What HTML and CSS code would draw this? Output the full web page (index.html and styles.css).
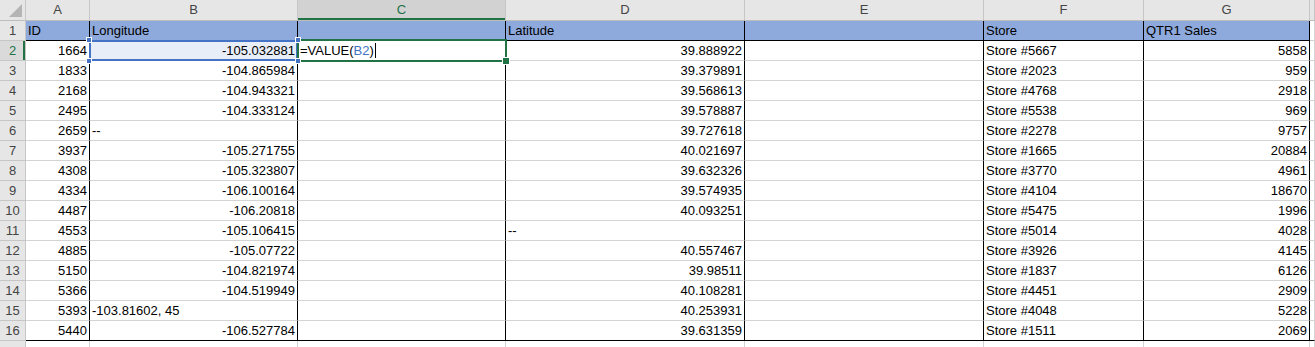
FILE: index.html
```html
<!DOCTYPE html>
<html lang="en">
  <head>
    <meta charset="UTF-8" />
    <meta name="viewport" content="width=device-width, initial-scale=1.0" />
    <title>Store locations - Sheet1</title>
    <link rel="stylesheet" href="styles.css">
  </head>
  <body>
    <div class="sheet" id="sheet"></div>

    <script>
      // sheet columns and rows (numbers are right aligned, text left aligned)
      const columns = ["A", "B", "C", "D", "E", "F", "G"];
      const rows = [
        ["ID", "Longitude", "", "Latitude", "", "Store", "QTR1 Sales"],
        [1664, -105.032881, "", 39.888922, "", "Store #5667", 5858],
        [1833, -104.865984, "", 39.379891, "", "Store #2023", 959],
        [2168, -104.943321, "", 39.568613, "", "Store #4768", 2918],
        [2495, -104.333124, "", 39.578887, "", "Store #5538", 969],
        [2659, "--", "", 39.727618, "", "Store #2278", 9757],
        [3937, -105.271755, "", 40.021697, "", "Store #1665", 20884],
        [4308, -105.323807, "", 39.632326, "", "Store #3770", 4961],
        [4334, -106.100164, "", 39.574935, "", "Store #4104", 18670],
        [4487, -106.20818, "", 40.093251, "", "Store #5475", 1996],
        [4553, -105.106415, "", "--", "", "Store #5014", 4028],
        [4885, -105.07722, "", 40.557467, "", "Store #3926", 4145],
        [5150, -104.821974, "", 39.98511, "", "Store #1837", 6126],
        [5366, -104.519949, "", 40.108281, "", "Store #4451", 2909],
        [5393, "-103.81602, 45", "", 40.253931, "", "Store #4048", 5228],
        [5440, -106.527784, "", 39.631359, "", "Store #1511", 2069],
      ];

      const sheet = document.getElementById("sheet");

      function addCell(className, html) {
        const div = document.createElement("div");
        div.className = className;
        div.innerHTML = html || "";
        sheet.appendChild(div);
        return div;
      }

      // column header row
      addCell("corner");
      columns.forEach((col) => {
        addCell(col === "C" ? "col-head active" : "col-head", col);
      });
      addCell("col-head");

      // data rows
      rows.forEach((row, r) => {
        const rowNum = r + 1;
        addCell(rowNum === 2 ? "row-head active" : "row-head", rowNum);

        row.forEach((value, c) => {
          let cls = "cell data";
          if (typeof value === "number") cls += " num";
          if (rowNum === 1) cls += " title";
          if (rowNum === rows.length) cls += " last";

          if (rowNum === 2 && c === 1) {
            // referenced cell B2
            addCell(
              cls + " ref",
              value +
                '<span class="handle tl"></span><span class="handle tr"></span>' +
                '<span class="handle bl"></span><span class="handle br"></span>'
            );
          } else if (rowNum === 2 && c === 2) {
            // cell being edited C2
            addCell(
              "cell data editing",
              '=VALUE(<span class="ref-text">B2</span>)<span class="caret"></span>'
            );
          } else {
            addCell(cls, value === "" ? "" : String(value));
          }
        });
        addCell(rowNum === rows.length ? "cell last" : "cell");
      });

      // partly visible row below the data (its number is out of view)
      addCell("row-head");
      columns.forEach(() => addCell("cell"));
      addCell("cell");
    </script>
  </body>
</html>
```

FILE: styles.css
```css
:root {
  --grid-line: #d4d4d4;
  --head-bg: #e6e6e6;
  --head-line: #c6c6c6;
  --excel-green: #217346;
  --ref-blue: #4472c4;
}

* {
  margin: 0;
  padding: 0;
  box-sizing: border-box;
}

html,
body {
  background: #fff;
  overflow: hidden;
  font-family: "Liberation Sans", Arial, sans-serif;
  font-size: 13px;
  color: #000;
}

.sheet {
  display: grid;
  grid-template-columns: 26px 64px 208px 208px 239px 239px 160px 166px 1fr;
  grid-template-rows: 21px;
  grid-auto-rows: 20px;
}

/* headers */
.corner,
.col-head,
.row-head {
  background: var(--head-bg);
  color: #444;
  border-right: 1px solid var(--head-line);
  border-bottom: 1px solid var(--head-line);
  text-align: center;
  line-height: 19px;
}

.corner {
  position: relative;
  border-bottom-color: #bdbdbd;
}

.corner::after {
  content: "";
  position: absolute;
  right: 3px;
  bottom: 3px;
  width: 13px;
  height: 13px;
  background: #b4b4b4;
  clip-path: polygon(100% 0, 100% 100%, 0 100%);
}

.col-head {
  border-bottom-color: #bdbdbd;
  line-height: 20px;
}

.col-head.active {
  background: #d2d2d2;
  color: var(--excel-green);
  box-shadow: inset 0 -2px 0 var(--excel-green);
}

.row-head.active {
  background: #dadada;
  color: var(--excel-green);
  box-shadow: inset -2px 0 0 var(--excel-green);
}

/* cells */
.cell {
  border-right: 1px solid var(--grid-line);
  border-bottom: 1px solid var(--grid-line);
  padding: 0 2px;
  line-height: 19px;
  white-space: nowrap;
}

.cell.data {
  border-right-color: #000;
}

.cell.num {
  text-align: right;
}

.cell.title {
  background: #8ea9db;
  border-bottom-color: #000;
}

.cell.last {
  border-bottom-color: #000;
}

/* formula reference B2 */
.cell.ref {
  position: relative;
  background: #e8eef8;
}

.cell.ref::after {
  content: "";
  position: absolute;
  top: -1px;
  left: -1px;
  right: -1px;
  bottom: -1px;
  border: 2px solid var(--ref-blue);
  z-index: 1;
}

.handle {
  position: absolute;
  width: 6px;
  height: 6px;
  background: var(--ref-blue);
  border: 1px solid #fff;
  z-index: 3;
}

.handle.tl {
  top: -4px;
  left: -4px;
}

.handle.tr {
  top: -4px;
  right: -4px;
}

.handle.bl {
  bottom: -4px;
  left: -4px;
}

.handle.br {
  bottom: -4px;
  right: -4px;
}

/* active cell C2 */
.cell.editing {
  position: relative;
}

.cell.editing::before {
  content: "";
  position: absolute;
  top: -2px;
  left: -1px;
  right: -2px;
  bottom: -2px;
  border: 2px solid var(--excel-green);
  z-index: 2;
}

.cell.editing::after {
  content: "";
  position: absolute;
  right: -5px;
  bottom: -5px;
  width: 6px;
  height: 6px;
  background: var(--excel-green);
  border: 1px solid #fff;
  z-index: 2;
}

.ref-text {
  color: var(--ref-blue);
}

.caret {
  display: inline-block;
  width: 1px;
  height: 15px;
  margin-left: 1px;
  background: #000;
  vertical-align: -3px;
}
```
